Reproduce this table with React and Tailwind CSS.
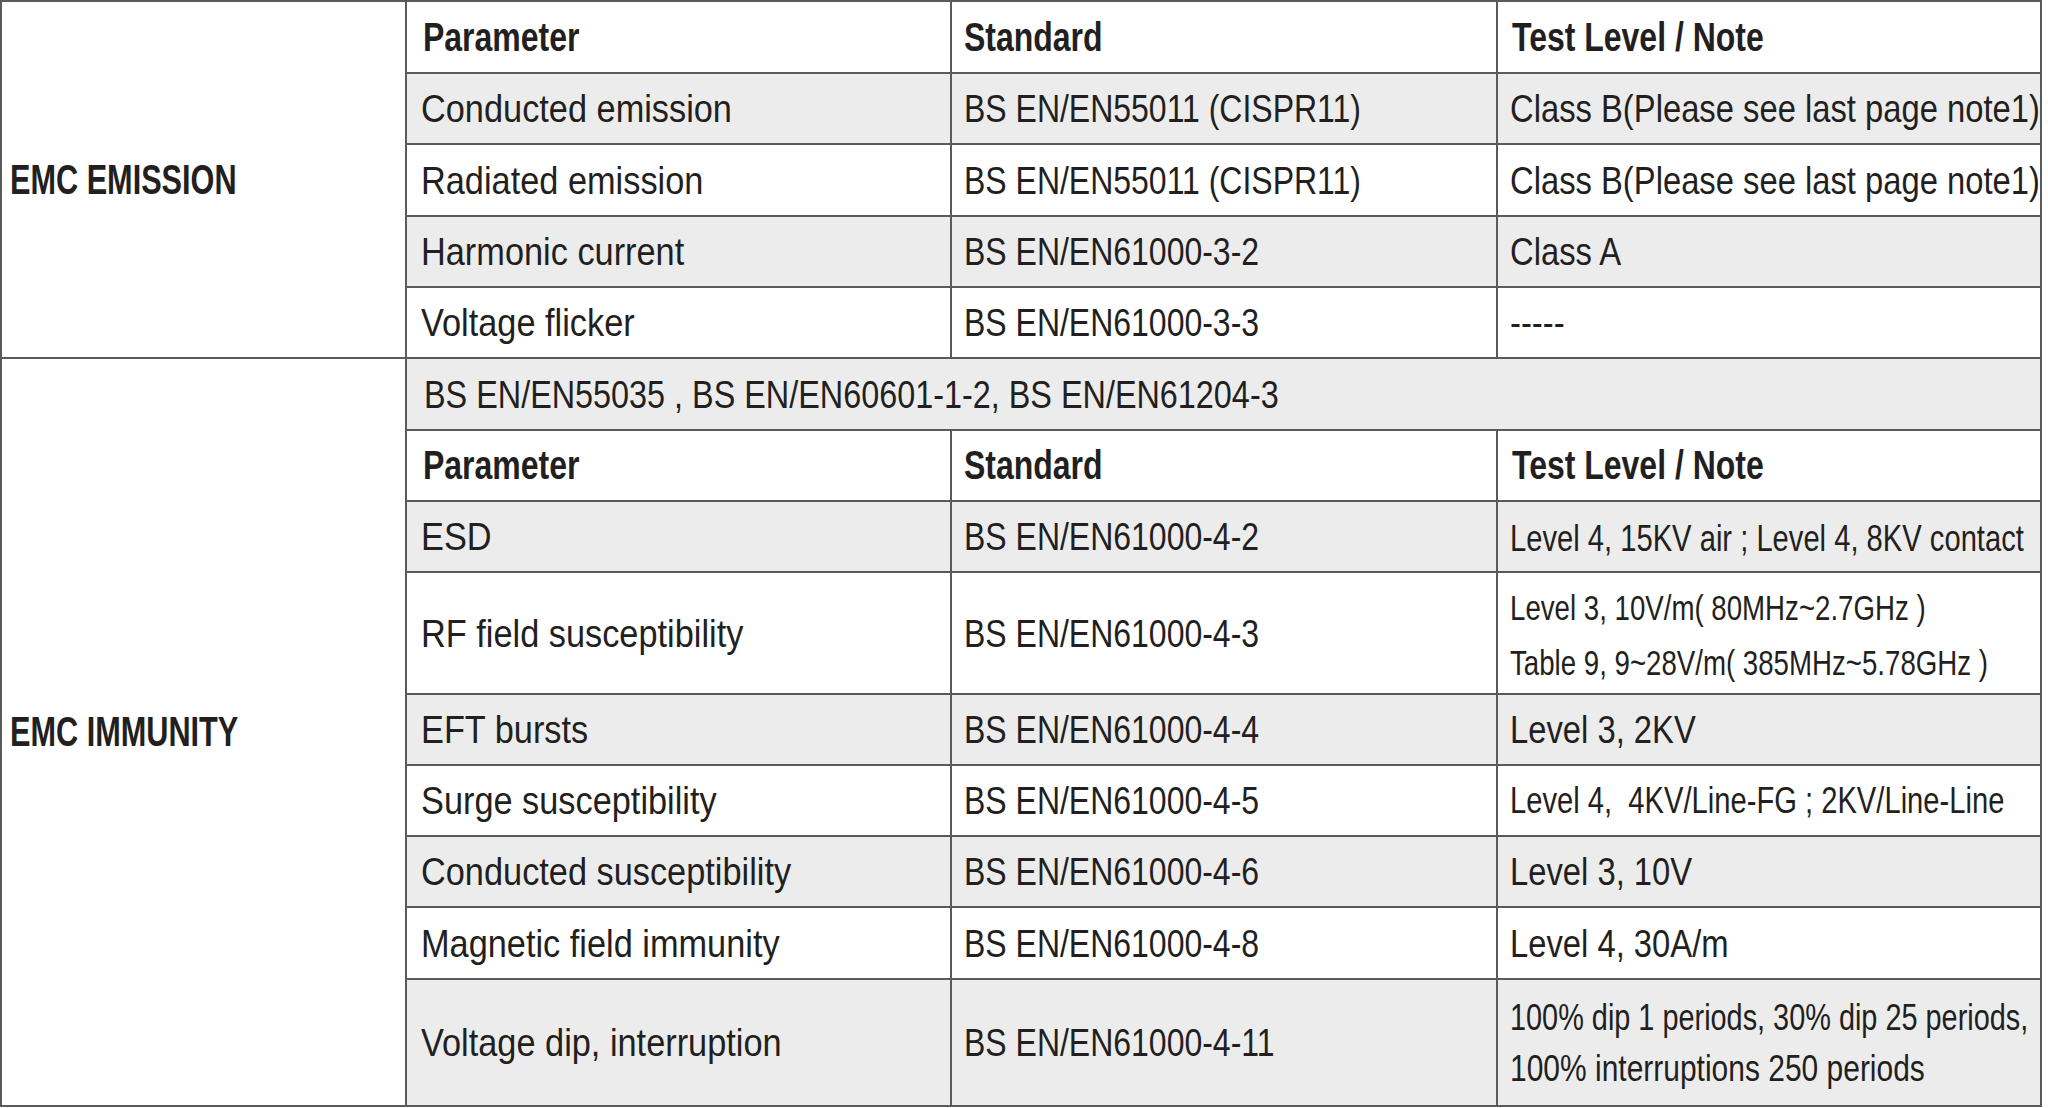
import React from "react";

// text styles: the source uses a condensed face, so Liberation Sans is squeezed a little
const styles = {
  body: "text-[39px] scale-x-88",
  std: "text-[39px] scale-x-82",
  note: "text-[39px] scale-x-84",
  list: "text-[39px] scale-x-83",
  small: "text-[36px] scale-x-81",
  tiny: "text-[35px] scale-x-79",
  dip: "text-[37px] scale-x-78",
  dip2: "text-[37px] scale-x-81",
  head: "text-[41px] font-bold scale-x-78",
  label: "text-[42px] font-bold scale-x-73",
};

function Txt({ kind = "body", children }) {
  return (
    <span
      className={`block origin-left whitespace-pre leading-none ${styles[kind]}`}
    >
      {children}
    </span>
  );
}

function Cell({ gray, pad = "pl-3", className = "", children }) {
  return (
    <div
      className={`flex flex-col justify-center ${pad} ${
        gray ? "bg-[#ececec]" : "bg-white"
      } ${className}`}
    >
      {children}
    </div>
  );
}

function HeaderRow() {
  return (
    <>
      <Cell pad="pl-[16px]">
        <Txt kind="head">Parameter</Txt>
      </Cell>
      <Cell>
        <Txt kind="head">Standard</Txt>
      </Cell>
      <Cell pad="pl-[14px]">
        <Txt kind="head">Test Level / Note</Txt>
      </Cell>
    </>
  );
}

function Row({ gray, param, standard, children }) {
  return (
    <>
      <Cell gray={gray} pad="pl-[14px]">
        <Txt>{param}</Txt>
      </Cell>
      <Cell gray={gray}>
        <Txt kind="std">{standard}</Txt>
      </Cell>
      <Cell gray={gray} pad="pl-3">
        {children}
      </Cell>
    </>
  );
}

export default function App() {
  return (
    <div className="min-h-screen bg-white font-['Liberation_Sans',Arial,sans-serif] text-[#231f20]">
      <div className="grid w-fit grid-cols-[403px_543px_544px_542px] grid-rows-[70px_69px_70px_69px_69px_70px_69px_69px_120px_69px_69px_69px_70px_125px] gap-[2px] bg-[#5a5a5a] p-[2px]">
        {/* EMC EMISSION */}
        <Cell pad="pl-[8px]" className="row-span-5">
          <Txt kind="label">EMC EMISSION</Txt>
        </Cell>
        <HeaderRow />
        <Row gray param="Conducted emission" standard="BS EN/EN55011 (CISPR11)">
          <Txt kind="note">Class B(Please see last page note1)</Txt>
        </Row>
        <Row param="Radiated emission" standard="BS EN/EN55011 (CISPR11)">
          <Txt kind="note">Class B(Please see last page note1)</Txt>
        </Row>
        <Row gray param="Harmonic current" standard="BS EN/EN61000-3-2">
          <Txt kind="note">Class A</Txt>
        </Row>
        <Row param="Voltage flicker" standard="BS EN/EN61000-3-3">
          <Txt kind="note">-----</Txt>
        </Row>

        {/* EMC IMMUNITY */}
        <Cell pad="pl-[8px]" className="row-span-9">
          <Txt kind="label">EMC IMMUNITY</Txt>
        </Cell>
        <Cell gray pad="pl-[17px]" className="col-span-3">
          <Txt kind="list">
            BS EN/EN55035 , BS EN/EN60601-1-2, BS EN/EN61204-3
          </Txt>
        </Cell>
        <HeaderRow />
        <Row gray param="ESD" standard="BS EN/EN61000-4-2">
          <div className="pt-1">
            <Txt kind="small">Level 4, 15KV air ; Level 4, 8KV contact</Txt>
          </div>
        </Row>
        <Row param="RF field susceptibility" standard="BS EN/EN61000-4-3">
          <div className="flex flex-col gap-[20px] pt-1">
            <Txt kind="tiny">Level 3, 10V/m( 80MHz~2.7GHz )</Txt>
            <Txt kind="tiny">Table 9, 9~28V/m( 385MHz~5.78GHz )</Txt>
          </div>
        </Row>
        <Row gray param="EFT bursts" standard="BS EN/EN61000-4-4">
          <Txt kind="note">Level 3, 2KV</Txt>
        </Row>
        <Row param="Surge susceptibility" standard="BS EN/EN61000-4-5">
          <Txt kind="small">Level 4,  4KV/Line-FG ; 2KV/Line-Line</Txt>
        </Row>
        <Row gray param="Conducted susceptibility" standard="BS EN/EN61000-4-6">
          <Txt kind="note">Level 3, 10V</Txt>
        </Row>
        <Row param="Magnetic field immunity" standard="BS EN/EN61000-4-8">
          <Txt kind="note">Level 4, 30A/m</Txt>
        </Row>
        <Row gray param="Voltage dip, interruption" standard="BS EN/EN61000-4-11">
          <div className="flex flex-col gap-[14px]">
            <Txt kind="dip">100% dip 1 periods, 30% dip 25 periods,</Txt>
            <Txt kind="dip2">100% interruptions 250 periods</Txt>
          </div>
        </Row>
      </div>
    </div>
  );
}
